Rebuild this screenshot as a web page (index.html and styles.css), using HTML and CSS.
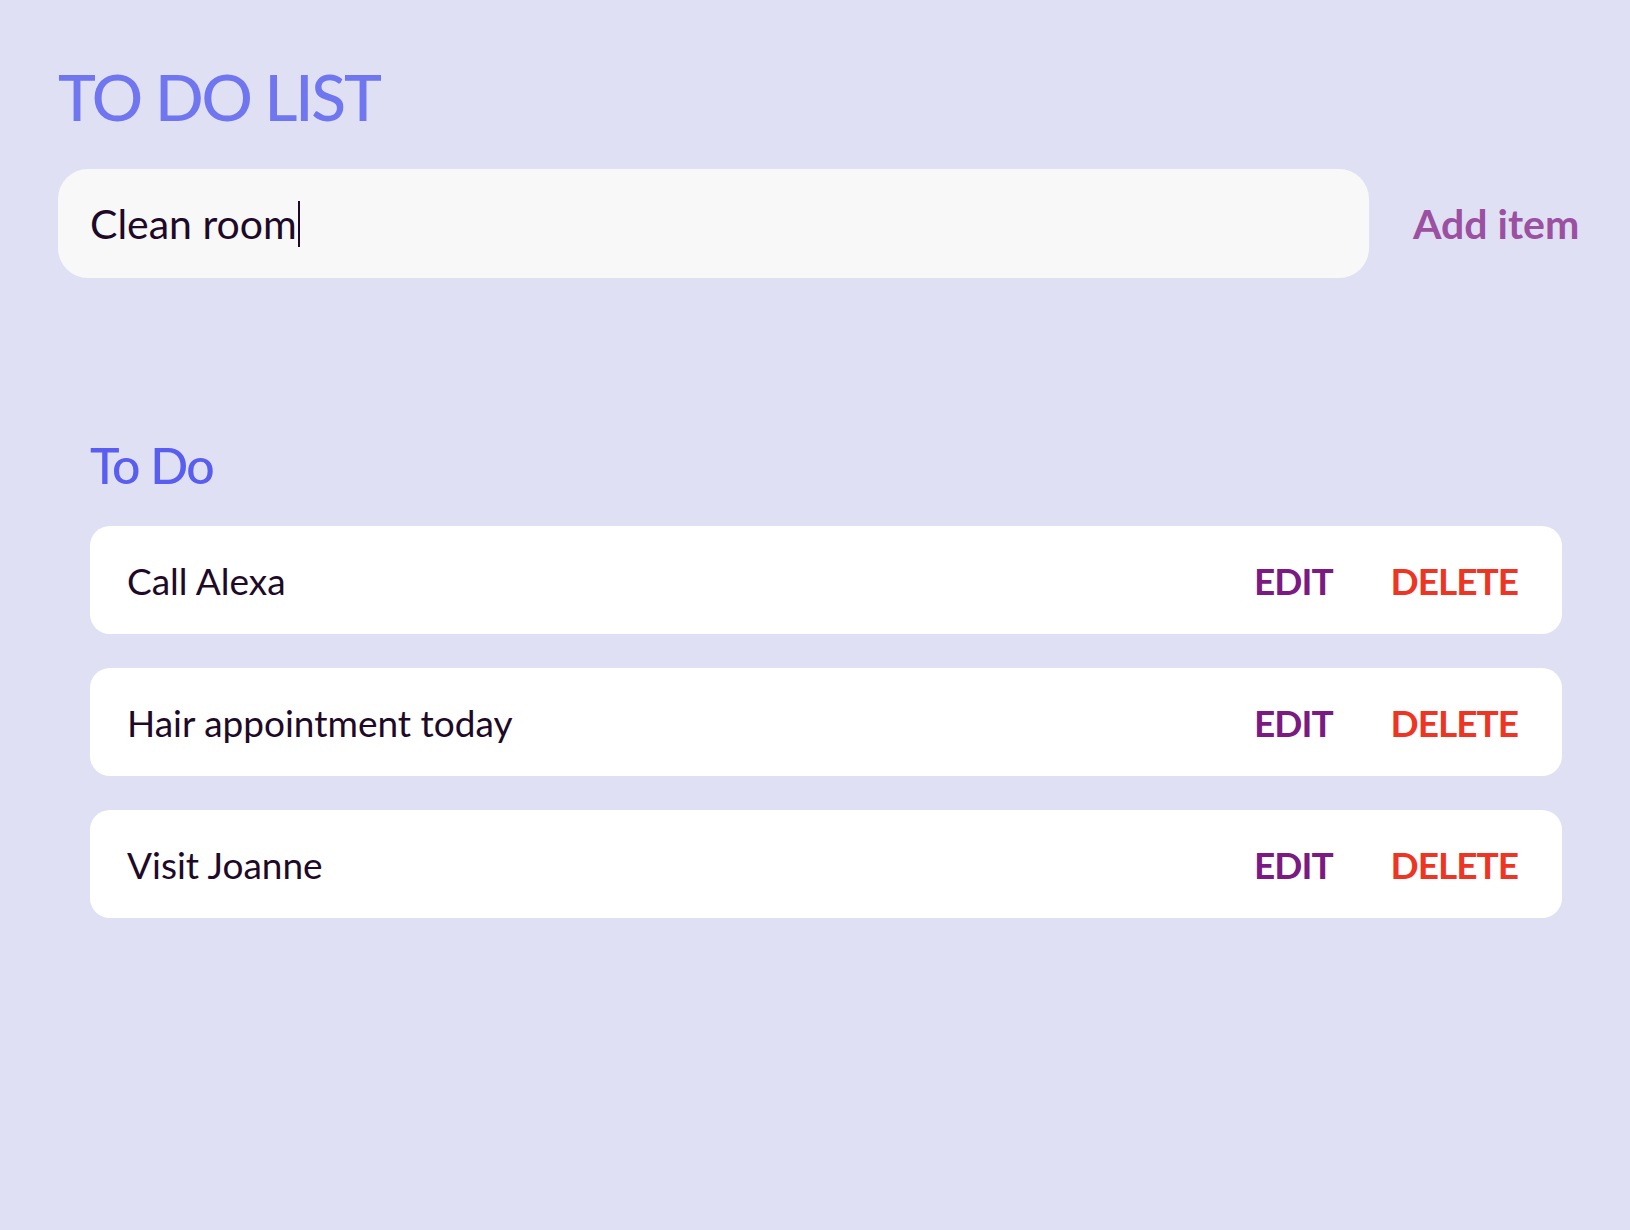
FILE: index.html
```html
<!DOCTYPE html>
<html lang="en">
<head>
<meta charset="utf-8">
<title>To Do List</title>
<link rel="stylesheet" href="styles.css">
</head>
<body>
<main class="app">
  <h1 class="title">TO DO LIST</h1>
  <div class="add-row">
    <div class="input"><span class="input-text">Clean room</span><span class="caret"></span></div>
    <button class="add-btn">Add item</button>
  </div>
  <section class="todo">
    <h2 class="todo-title">To Do</h2>
    <ul class="list">
      <li class="card"><span class="card-text">Call Alexa</span><span class="actions"><span class="edit">EDIT</span><span class="delete">DELETE</span></span></li>
      <li class="card"><span class="card-text">Hair appointment today</span><span class="actions"><span class="edit">EDIT</span><span class="delete">DELETE</span></span></li>
      <li class="card"><span class="card-text">Visit Joanne</span><span class="actions"><span class="edit">EDIT</span><span class="delete">DELETE</span></span></li>
    </ul>
  </section>
</main>
</body>
</html>
```
FILE: styles.css
```css
* { box-sizing: border-box; }
html, body { margin: 0; padding: 0; }
body {
  background: #e0e0f5;
  font-family: Lato, "Open Sans", sans-serif;
  color: #1e0a28;
  width: 1630px;
  height: 1230px;
}
.app { padding: 64px 0 0 58px; }
.title {
  margin: 0;
  font-size: 64px;
  line-height: 66px;
  font-weight: 500;
  letter-spacing: -2.2px;
  color: #7075f0;
}
.add-row {
  display: flex;
  align-items: center;
  margin-top: 39px;
}
.input {
  width: 1311px;
  height: 109px;
  background: #f8f8f8;
  border-radius: 30px;
  display: flex;
  align-items: center;
  padding-left: 32px;
}
.input-text { font-size: 41px; line-height: 1; }
.caret { display: inline-block; width: 2px; height: 46px; background: #1e0a28; margin-left: 1px; }
.add-btn {
  margin-left: 44px;
  padding: 0;
  border: 0;
  background: none;
  font-family: inherit;
  font-size: 41px;
  font-weight: 700;
  color: #9b50a2;
}
.todo { padding: 162px 0 0 32px; }
.todo-title {
  margin: 0 0 36px;
  font-size: 50px;
  line-height: 1;
  font-weight: 500;
  letter-spacing: -1.5px;
  color: #5a5ef0;
}
.list { list-style: none; margin: 0; padding: 0; display: flex; flex-direction: column; gap: 34px; }
.card {
  width: 1472px;
  height: 108px;
  background: #ffffff;
  border-radius: 20px;
  display: flex;
  align-items: center;
  justify-content: space-between;
  padding: 0 44px 0 37px;
}
.card-text { font-size: 37px; }
.actions { display: flex; gap: 58px; font-size: 37px; font-weight: 700; letter-spacing: -1px; }
.edit { color: #7a1a82; }
.delete { color: #ee3524; }
```
